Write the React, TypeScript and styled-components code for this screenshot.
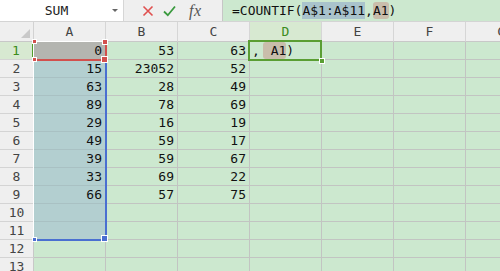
import React from "react";
import styled, { createGlobalStyle } from "styled-components";

const Global = createGlobalStyle`
  html, body { margin: 0; padding: 0; background: #cce8cf; overflow: hidden; }
  body { font-family: "DejaVu Sans Mono", "Liberation Mono", monospace; }
`;

const Page = styled.div`
  width: 500px;
  height: 271px;
  overflow: hidden;
  display: flex;
  flex-direction: column;
`;

const FormulaBar = styled.div`
  display: flex;
  height: 21px;
  border-bottom: 1px solid #d4d4d4;
  background: #efefef;
  flex-shrink: 0;
`;

const NameBox = styled.div`
  width: 124px;
  background: #ffffff;
  border-right: 1px solid #d6d6d6;
  position: relative;
  display: flex;
  align-items: center;
  justify-content: center;
  font-size: 13px;
  color: #222;
  padding-right: 16px;
  box-sizing: border-box;
  padding-left: 6px;
`;

const DropArrow = styled.span`
  position: absolute;
  right: 5px;
  top: 9px;
  width: 0;
  height: 0;
  border-left: 3px solid transparent;
  border-right: 3px solid transparent;
  border-top: 3px solid #666;
`;

const Tools = styled.div`
  width: 98px;
  display: flex;
  align-items: center;
  padding-left: 18px;
  gap: 9px;
  box-sizing: border-box;
`;

const Fx = styled.span`
  font-family: "Liberation Serif", "DejaVu Serif", serif;
  font-style: italic;
  font-size: 16px;
  color: #555;
  margin-left: 4px;
  letter-spacing: 0.5px;
`;

const FormulaInput = styled.div`
  flex: 1;
  background: #cce8cf;
  border-left: 1px solid #c6c6c6;
  display: flex;
  align-items: center;
  padding-left: 9px;
  font-size: 13px;
  color: #111;
  white-space: pre;
`;

const Ref = styled.span<{ $kind: "range" | "cell" }>`
  background: ${(p) => (p.$kind === "range" ? "#a9c3cc" : "#c9bdab")};
  border-radius: ${(p) => (p.$kind === "range" ? "0" : "3px")};
  padding: 1px 0;
`;

const SheetWrap = styled.div`
  position: relative;
  flex: 1;
  overflow: hidden;
`;

const Sheet = styled.div`
  display: grid;
  grid-template-columns: 34px repeat(7, 72px);
  grid-template-rows: 20px repeat(13, 18px);
`;

const Corner = styled.div`
  background: #efefef;
  border-right: 1px solid #d2d2d2;
  border-bottom: 1px solid #c8c8c8;
  box-sizing: border-box;
  position: relative;
  &::after {
    content: "";
    position: absolute;
    right: 3px;
    bottom: 3px;
    width: 0;
    height: 0;
    border-left: 9px solid transparent;
    border-bottom: 9px solid #c9c9c9;
  }
`;

const ColHead = styled.div<{ $active?: boolean }>`
  background: ${(p) => (p.$active ? "#d7e9d1" : "#efefef")};
  color: ${(p) => (p.$active ? "#3b8c1c" : "#444")};
  border-right: 1px solid #d6d6d6;
  border-bottom: 1px solid #c8c8c8;
  box-sizing: border-box;
  display: flex;
  align-items: center;
  justify-content: center;
  font-size: 13px;
`;

const RowHead = styled.div<{ $active?: boolean }>`
  background: ${(p) => (p.$active ? "#d7e9d1" : "#efefef")};
  color: ${(p) => (p.$active ? "#3b8c1c" : "#444")};
  border-right: ${(p) => (p.$active ? "2px solid #4f9b2b" : "1px solid #c8c8c8")};
  border-bottom: 1px solid #d4d4d4;
  box-sizing: border-box;
  display: flex;
  align-items: center;
  justify-content: center;
  font-size: 13px;
`;

const Cell = styled.div<{ $tone?: "ref" | "range" }>`
  background: ${(p) =>
    p.$tone === "ref" ? "#b4b5b0" : p.$tone === "range" ? "#b3cfd0" : "#cce8cf"};
  border-right: 1px solid #c2c4c2;
  border-bottom: 1px solid ${(p) => (p.$tone === "range" ? "#a9c1c3" : "#c2c4c2")};
  box-sizing: border-box;
  display: flex;
  align-items: center;
  justify-content: flex-end;
  padding-right: 3px;
  font-size: 13px;
  color: #111;
  white-space: pre;
  overflow: visible;
`;

const EditCell = styled(Cell)`
  justify-content: flex-start;
  padding-left: 2px;
`;

const Box = styled.div<{ $color: string }>`
  position: absolute;
  box-sizing: border-box;
  border-top: 1px solid #fff;
  border-left: 1px solid #fff;
  border-right: 2px solid ${(p) => p.$color};
  border-bottom: 2px solid ${(p) => p.$color};
  pointer-events: none;
`;

const Handle = styled.div<{ $color: string; $size: number }>`
  position: absolute;
  width: ${(p) => p.$size}px;
  height: ${(p) => p.$size}px;
  background: ${(p) => p.$color};
  box-sizing: border-box;
  outline: 1px solid #fff;
`;

const ActiveBox = styled.div`
  position: absolute;
  box-sizing: border-box;
  border: 2px solid #5a9e33;
  pointer-events: none;
`;

const cols = ["A", "B", "C", "D", "E", "F", "G"];
const data: (number | null)[][] = [
  [0, 53, 63],
  [15, 23052, 52],
  [63, 28, 49],
  [89, 78, 69],
  [29, 16, 19],
  [49, 59, 17],
  [39, 59, 67],
  [33, 69, 22],
  [66, 57, 75],
];

const XIcon = () => (
  <svg width="12" height="12" viewBox="0 0 12 12">
    <path d="M1.5 1.5 L10.5 10.5 M10.5 1.5 L1.5 10.5" stroke="#e0504f" strokeWidth="1.6" fill="none" />
  </svg>
);

const CheckIcon = () => (
  <svg width="13" height="12" viewBox="0 0 13 12">
    <path d="M1 6.5 L4.8 10.2 L12 1.5" stroke="#3a9a3e" strokeWidth="1.8" fill="none" />
  </svg>
);

export default function App() {
  const rows = Array.from({ length: 13 }, (_, i) => i);
  return (
    <Page>
      <Global />
      <FormulaBar>
        <NameBox>
          SUM
          <DropArrow />
        </NameBox>
        <Tools>
          <XIcon />
          <CheckIcon />
          <Fx>fx</Fx>
        </Tools>
        <FormulaInput>
          =COUNTIF(<Ref $kind="range">A$1:A$11</Ref>,<Ref $kind="cell">A1</Ref>)
        </FormulaInput>
      </FormulaBar>
      <SheetWrap>
        <Sheet>
          <Corner />
          {cols.map((c) => (
            <ColHead key={c} $active={c === "D"}>
              {c}
            </ColHead>
          ))}
          {rows.map((r) => (
            <React.Fragment key={r}>
              <RowHead $active={r === 0}>{r + 1}</RowHead>
              {cols.map((c, ci) => {
                const v = data[r]?.[ci];
                const tone =
                  ci === 0 && r === 0 ? "ref" : ci === 0 && r < 11 ? "range" : undefined;
                if (ci === 3 && r === 0) {
                  return (
                    <EditCell key={c}>
                      ,<Ref $kind="cell" style={{ marginLeft: 3 }}> A1</Ref>)
                    </EditCell>
                  );
                }
                return (
                  <Cell key={c} $tone={tone}>
                    {v !== undefined && v !== null ? String(v) : ""}
                  </Cell>
                );
              })}
            </React.Fragment>
          ))}
        </Sheet>
        <Box $color="#4a6fd1" style={{ left: 33, top: 19, width: 74, height: 200 }} />
        <Box $color="#d2504d" style={{ left: 33, top: 19, width: 74, height: 20 }} />
        <Handle $color="#d2504d" $size={3} style={{ left: 33, top: 18 }} />
        <Handle $color="#d2504d" $size={4} style={{ left: 103, top: 18 }} />
        <Handle $color="#d2504d" $size={3} style={{ left: 33, top: 36 }} />
        <Handle $color="#d2504d" $size={5} style={{ left: 102, top: 35 }} />
        <Handle $color="#4a6fd1" $size={3} style={{ left: 33, top: 216 }} />
        <Handle $color="#4a6fd1" $size={5} style={{ left: 102, top: 214 }} />
        <ActiveBox style={{ left: 248, top: 18, width: 74, height: 21 }} />
        <Handle $color="#5a9e33" $size={4} style={{ left: 320, top: 37 }} />
      </SheetWrap>
    </Page>
  );
}
